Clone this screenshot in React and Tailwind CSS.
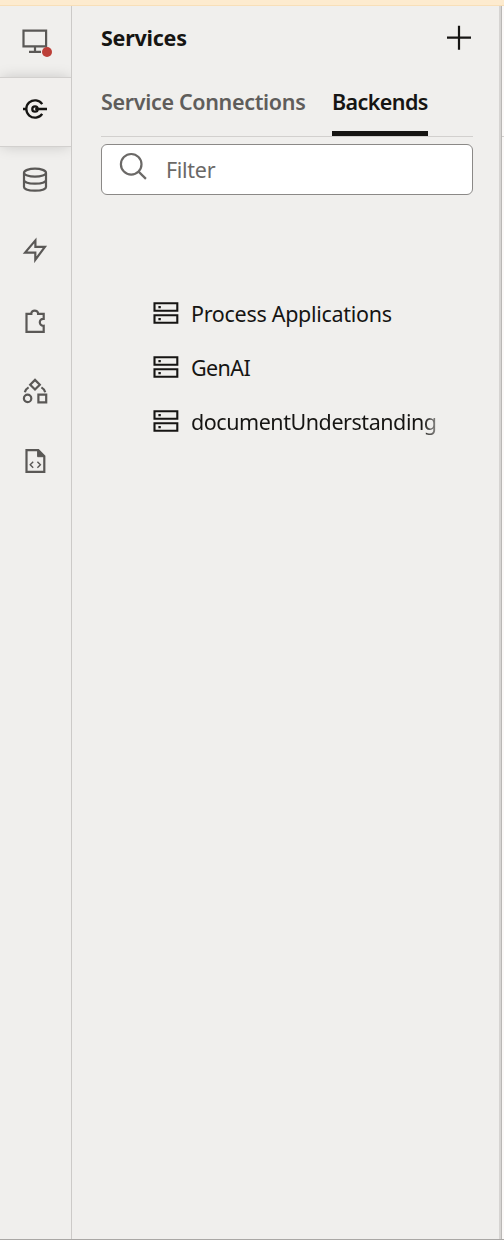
import React from "react";

function Icon({ children, className = "", sw = 2.2 }) {
  return (
    <svg width="26" height="26" viewBox="0 0 26 26" fill="none" stroke="currentColor" strokeWidth={sw} className={className}>
      {children}
    </svg>
  );
}

const railItems = [
  {
    name: "Services",
    icon: (
      <Icon sw={2.3}>
        <path d="M1 13h4M13.2 13H25" />
        <path d="M20.2 8.1A8.7 8.7 0 1 0 20.2 17.9" />
        <circle cx="13" cy="13" r="2.7" />
      </Icon>
    ),
  },
  {
    name: "Business Objects",
    icon: (
      <Icon>
        <ellipse cx="13" cy="5.7" rx="11" ry="4" />
        <path d="M2 6v14c0 2.2 4.9 3.7 11 3.7s11-1.5 11-3.7V6M2 13c0 2.2 4.9 3.7 11 3.7s11-1.5 11-3.7" />
      </Icon>
    ),
  },
  {
    name: "Processes",
    icon: (
      <Icon>
        <path d="M13.4 3.4 3.1 15.6h10.2v7.2L22.9 9.9h-9.5z" />
      </Icon>
    ),
  },
  {
    name: "Components",
    icon: (
      <Icon>
        <path d="M4.5 5.8h4.8c-.2-4.3 7-4.3 6.8 0h5.6v5c-5.2-.5-5.2 7.5 0 7v6h-17.2z" />
      </Icon>
    ),
  },
  {
    name: "Layouts",
    icon: (
      <Icon>
        <path d="M13 1.9 17.8 6.7 13 11.5 8.2 6.7z" />
        <circle cx="5.6" cy="20.4" r="3.7" />
        <path d="M16.4 16.6h7.8v7.8h-7.8z" />
        <path d="M2.8 14.2c.5-2 1.7-3.6 3.8-4.8M23.2 14.2c-.5-2-1.7-3.6-3.8-4.8" />
      </Icon>
    ),
  },
  {
    name: "Source",
    icon: (
      <Icon>
        <path d="M4.5 2.2h11.8l6 6V23.8H4.5z" />
        <path d="M15.6 2v6.7h6.7z" fill="currentColor" strokeWidth="1" />
        <path d="m11.2 13.8-3 3 3 3M15.4 13.8l3 3-3 3" strokeWidth="1.4" />
      </Icon>
    ),
  },
];

const backends = [
  { name: "Process Applications", label: "whitespace-nowrap tracking-[-0.3px]" },
  { name: "GenAI", label: "whitespace-nowrap tracking-[-0.6px]" },
  {
    name: "documentUnderstanding",
    label: "whitespace-nowrap tracking-[-0.45px] [mask-image:linear-gradient(to_right,black_94%,rgba(0,0,0,0.45))]",
  },
];

function ServerIcon() {
  return (
    <svg width="26" height="24" viewBox="0 0 26 24" fill="none" stroke="currentColor" strokeWidth="2.1" className="mb-[2px] shrink-0">
      <path d="M1.5 2.3h22.8v7.5H1.5zM1.5 14.3h22.8v7.5H1.5z" />
      <path d="M5.4 6.1h2.4M5.4 18.1h2.4" strokeWidth="2.4" />
    </svg>
  );
}

function Rail() {
  return (
    <nav className="flex w-[72px] shrink-0 flex-col border-r border-[#cccac8] pr-px text-[#5a5856]">
      <button className="flex h-[71px] items-center justify-center pb-[2px]" aria-label="Web Applications">
        <span className="relative flex">
          <Icon>
            <path d="M1.5 2.6h22.6v15.8H1.5zM13 18.5v5M7 23.8h12" />
          </Icon>
          <span className="absolute -right-[4px] -bottom-[3px] size-[10px] rounded-full bg-[#bc3f38]" />
        </span>
      </button>
      {railItems.map(({ name, icon }, i) => (
        <button
          key={name}
          aria-label={name}
          className={
            i === 0
              ? "-mr-px flex h-[70px] items-center justify-center border-y border-[#d2d0ce] bg-[#f1efed] pr-px pb-[7px] text-[#161513] shadow-[0_0_14px_-2px_rgba(0,0,0,0.22)] [clip-path:inset(-16px_0)]"
              : "flex h-[70.3px] items-center justify-center pb-[4px]"
          }
        >
          {icon}
        </button>
      ))}
    </nav>
  );
}

function Panel() {
  return (
    <main className="flex w-[427px] shrink-0 flex-col pr-[26px] pl-[29px]">
      <header className="flex h-[64px] items-center justify-between">
        <h1 className="text-[21.5px] font-bold tracking-[-0.25px]">Services</h1>
        <svg width="26" height="26" viewBox="0 0 26 26" stroke="currentColor" strokeWidth="2.2" className="mr-[1px]">
          <path d="M1 12.7h24M13 .7v24" />
        </svg>
      </header>
      <div className="flex h-[67px] gap-[27px] border-b border-[#d2d0ce] text-[21.5px] font-semibold">
        <div className="flex h-[66px] w-[204px] items-center pb-[2px] tracking-[-0.33px] whitespace-nowrap text-[#5f5d5b]">Service Connections</div>
        <div className="flex h-[66px] w-[96px] items-center border-b-[5px] border-[#161513] pt-[3px] tracking-[-0.6px]">Backends</div>
      </div>
      <label className="mt-[7px] flex h-[51px] items-center rounded-[6px] border border-[#8b8987] bg-white pl-[17px] text-[#6b6967]">
        <svg width="30" height="30" viewBox="0 0 30 30" fill="none" stroke="currentColor" strokeWidth="2.2" className="mb-[6px]">
          <circle cx="12.2" cy="12.3" r="10.3" />
          <path d="m19.6 19.6 7.3 7.3" />
        </svg>
        <span className="ml-[17px] pt-[2px] text-[21.5px] tracking-[-0.3px]">Filter</span>
      </label>
      <ul className="mt-[92px] pl-[52px] text-[21.5px]">
        {backends.map(({ name, label }) => (
          <li key={name} className="flex h-[54px] items-center gap-[12px]">
            <ServerIcon />
            <span className={label}>{name}</span>
          </li>
        ))}
      </ul>
    </main>
  );
}

export default function App() {
  return (
    <div className="flex h-[1240px] w-[504px] flex-col overflow-hidden border-b border-[#a9a7a5] bg-[#f0efed] font-['Noto_Sans','Open_Sans',sans-serif] text-[#161513]">
      <div className="h-[6px] shrink-0 border-b border-[#f8dfb8] bg-[#fdebcf]" />
      <div className="flex grow">
        <Rail />
        <Panel />
        <div className="w-[3px] shrink-0 border-r border-[#b9b7b5] bg-[#d6d4d2]" />
        <div className="w-[2px] shrink-0 bg-[#fbf9f8]">
          <div className="h-[131px] border-b border-[#d2d0ce]" />
        </div>
      </div>
    </div>
  );
}
